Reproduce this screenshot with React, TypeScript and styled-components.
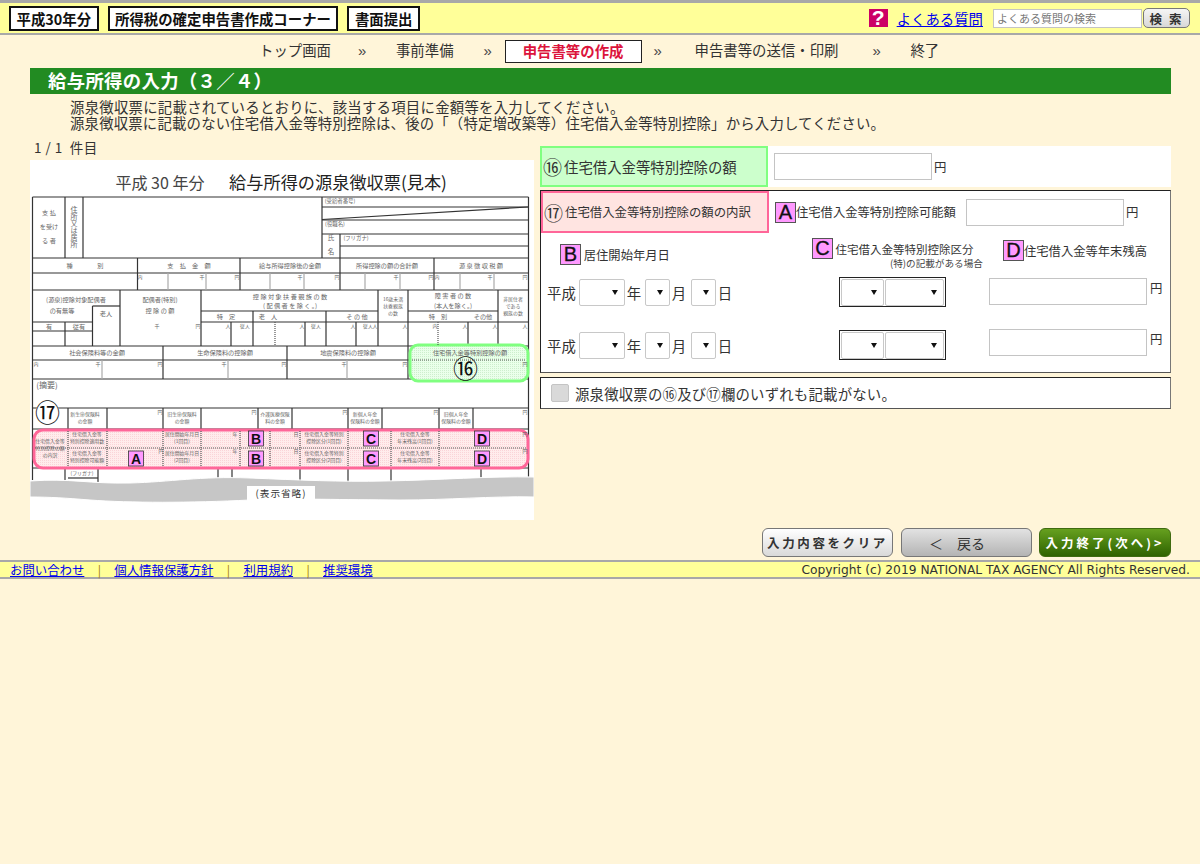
import React from "react";
import styled, { createGlobalStyle } from "styled-components";

const GlobalStyle = createGlobalStyle`
  html, body {
    margin: 0;
    padding: 0;
    background: #fff5d9;
  }
  body {
    height: 864px;
    overflow: hidden;
    color: #333;
    font-family: "Noto Sans CJK JP", "Liberation Sans", sans-serif;
    font-size: 14.4px;
  }
`;

const Header = styled.header`
  display: flex;
  align-items: center;
  height: 30px;
  padding: 0 10px 0 9px;
  background: #ffff99;
  border-top: 3px solid #a8a8a8;
  border-bottom: 2px solid #a8a8a8;
`;

const Pill = styled.div`
  display: flex;
  align-items: center;
  height: 21px;
  padding: 0 5.5px;
  margin-right: 9px;
  background: #fff;
  border: 2px solid #111;
  color: #111;
  font-size: 14.4px;
  font-weight: 700;
  white-space: nowrap;
`;

const HeaderRight = styled.div`
  display: flex;
  align-items: center;
  margin-left: auto;
`;

const HelpIcon = styled.div`
  display: flex;
  align-items: center;
  justify-content: center;
  width: 19px;
  height: 18px;
  margin-right: 9px;
  background: #cc0066;
  color: #fff;
  font-family: "Liberation Sans", sans-serif;
  font-size: 21px;
  font-weight: 700;
  line-height: 18px;
`;

const Link = styled.a<{ $size?: number }>`
  color: #0000ee;
  text-decoration: underline;
  font-size: ${(p) => p.$size ?? 14.4}px;
  white-space: nowrap;
`;

const SearchInput = styled.input`
  box-sizing: border-box;
  width: 149px;
  height: 19px;
  margin-left: 10px;
  padding: 0 3px;
  background: #fff;
  border: 1px solid #c4c4c4;
  font-family: inherit;
  font-size: 11px;
  &::placeholder {
    color: #777;
    opacity: 1;
  }
`;

const SearchButton = styled.button`
  box-sizing: border-box;
  width: 47px;
  height: 20px;
  margin-left: 1px;
  padding: 0;
  background: linear-gradient(#f5f5f5, #d8d8d8);
  border: 1px solid #777;
  border-radius: 5px;
  color: #333;
  font-family: inherit;
  font-size: 12.5px;
  font-weight: 700;
  letter-spacing: 2px;
`;

const Steps = styled.nav`
  display: flex;
  align-items: center;
  height: 33px;
  padding-left: 259px;
  box-sizing: border-box;
  white-space: nowrap;
`;

const Step = styled.span<{ $gap: number }>`
  margin-right: ${(p) => p.$gap}px;
  padding-bottom: 5px;
  color: #333;
`;

const Arrow = styled.span<{ $gap: number }>`
  width: 9px;
  margin-right: ${(p) => p.$gap}px;
  padding-bottom: 3px;
  color: #444;
  font-family: "Liberation Sans", sans-serif;
  font-size: 15px;
`;

const ActiveStep = styled.span`
  box-sizing: border-box;
  display: flex;
  align-items: center;
  justify-content: center;
  width: 137px;
  height: 23px;
  margin-right: 12px;
  padding-bottom: 3px;
  background: #fff;
  border: 1px solid #222;
  color: #dc143c;
  font-weight: 700;
`;

const Main = styled.main`
  box-sizing: border-box;
  width: 1141px;
  margin-left: 30px;
`;

const TitleBar = styled.h1`
  box-sizing: border-box;
  height: 26px;
  margin: 0;
  padding-left: 18px;
  background: #228b22;
  color: #fff;
  font-size: 18.4px;
  font-weight: 700;
  line-height: 25px;
  letter-spacing: 0.3px;
  text-spacing-trim: space-all;
`;

const Lead = styled.div`
  margin: 5px 0 0 40px;
`;

const LeadLine = styled.p<{ $spacing: number }>`
  margin: 0;
  color: #333;
  font-size: 14.4px;
  line-height: 16px;
  letter-spacing: ${(p) => p.$spacing}px;
  white-space: nowrap;
  text-spacing-trim: space-all;
`;

const Columns = styled.div`
  display: grid;
  grid-template-columns: 504px 631px;
  column-gap: 6px;
  margin-top: 7px;
`;

const LeftColumn = styled.section`
  display: flex;
  flex-direction: column;
`;

const Counter = styled.div`
  height: 22px;
  padding-left: 4px;
  font-size: 13.5px;
  line-height: 18px;
  letter-spacing: 0.5px;
  white-space: pre;
`;

const SampleSvg = styled.svg`
  display: block;
  width: 504px;
  height: 360px;
  background: #fff;

  line {
    stroke: #333;
    stroke-width: 1.2;
  }
  text {
    fill: #666;
    font-family: "Noto Sans CJK JP", sans-serif;
    font-size: 6.2px;
    text-anchor: middle;
  }
`;

const RightColumn = styled.section`
  display: flex;
  flex-direction: column;
  padding-top: 8px;
`;

const AmountRow = styled.div`
  display: flex;
  align-items: center;
  height: 41px;
  background: #fff;
`;

const Caption = styled.div<{ $tone: "green" | "pink"; $size: number }>`
  box-sizing: border-box;
  display: flex;
  align-items: center;
  flex: none;
  width: 228px;
  height: ${(p) => (p.$tone === "green" ? 41 : 42)}px;
  padding-left: 1px;
  background: ${(p) => (p.$tone === "green" ? "#ccffcc" : "#ffe4e1")};
  border: 2px solid ${(p) => (p.$tone === "green" ? "#80ff80" : "#ff6699")};
  color: #333;
  font-size: ${(p) => p.$size}px;
  white-space: nowrap;
`;

const Circled = styled.span`
  font-size: 19px;
  line-height: 1;
  margin-right: 2px;
`;

const AmountInput = styled.input<{ $left: number }>`
  box-sizing: border-box;
  flex: none;
  width: 158px;
  height: 27px;
  margin-left: ${(p) => p.$left}px;
  background: #fff;
  border: 1px solid #c4c4c4;
`;

const Yen = styled.span`
  margin-left: 2px;
  color: #333;
  font-size: 12.4px;
`;

const Panel = styled.div`
  box-sizing: border-box;
  display: flex;
  flex-direction: column;
  height: 183px;
  margin-top: 3px;
  background: #fff;
  border: 1px solid #222;
  border-right-color: #777;
  border-bottom-color: #555;
`;

const PanelTop = styled.div`
  display: flex;
  align-items: center;
`;

const Badge = styled.span`
  box-sizing: border-box;
  display: inline-flex;
  align-items: center;
  justify-content: center;
  flex: none;
  width: 21px;
  height: 21px;
  background: #ff99ff;
  border: 1px solid #555;
  color: #111;
  font-family: "Liberation Sans", sans-serif;
  font-size: 20px;
  -webkit-text-stroke: 0.3px #111;
`;

const Labelled = styled.div<{ $width: number; $size?: number }>`
  display: flex;
  align-items: center;
  flex: none;
  width: ${(p) => p.$width}px;
  color: #333;
  font-size: ${(p) => p.$size ?? 12.3}px;
  white-space: nowrap;
`;

const BadgeSlot = styled.div`
  margin-left: 6px;
  width: 191px;
  display: flex;
  align-items: center;
`;

const HeadRow = styled.div`
  display: flex;
  height: 44px;
  padding-left: 19px;
  box-sizing: border-box;
`;

const HeadCell = styled.div<{ $width: number; $top: number }>`
  flex: none;
  width: ${(p) => p.$width}px;
  padding-top: ${(p) => p.$top}px;
  box-sizing: border-box;
`;

const SubNote = styled.div`
  margin-top: -2px;
  padding-left: 78px;
  color: #444;
  font-size: 9.6px;
  line-height: 12px;
  white-space: nowrap;
`;

const EntryRow = styled.div<{ $top: number }>`
  display: grid;
  grid-template-columns: 298px 150px 1fr;
  align-items: start;
  margin-top: ${(p) => p.$top}px;
`;

const DateCell = styled.div`
  display: flex;
  align-items: center;
  height: 30px;
  padding-left: 6px;
  font-size: 14.4px;
`;

const DateUnit = styled.span`
  margin: 0 1px 0 2px;
  width: 17px;
`;

const SelectWrap = styled.span<{ $width: number; $left?: number }>`
  position: relative;
  display: inline-block;
  flex: none;
  width: ${(p) => p.$width}px;
  height: 27px;
  margin-left: ${(p) => p.$left ?? 0}px;

  &::after {
    content: "";
    position: absolute;
    top: 11px;
    right: 7px;
    border-style: solid;
    border-width: 5px 3px 0;
    border-color: #111 transparent transparent;
    pointer-events: none;
  }
`;

const PlainSelect = styled.select`
  appearance: none;
  box-sizing: border-box;
  display: block;
  width: 100%;
  height: 100%;
  background: #fff;
  border: 1px solid #c8c8c8;
  border-radius: 2px;
`;

const SelectGroup = styled.div`
  box-sizing: border-box;
  display: flex;
  gap: 1px;
  width: 107px;
  height: 30px;
  padding: 1px;
  background: #fff;
  border: 1px solid #222;
`;

const EntryAmount = styled.div<{ $top: number }>`
  display: flex;
  align-items: flex-start;
  margin-top: ${(p) => p.$top}px;
`;

const SmallYen = styled.span`
  margin: 1px 0 0 3px;
  font-size: 12.4px;
`;

const CheckRow = styled.label`
  box-sizing: border-box;
  display: flex;
  align-items: center;
  height: 32px;
  margin-top: 4px;
  padding-left: 10px;
  background: #fff;
  border: 1px solid #222;
  border-right-color: #777;
  border-bottom-color: #555;
  color: #333;
  font-size: 14.4px;
  letter-spacing: 0.2px;
  white-space: nowrap;
`;

const CheckMark = styled.span`
  box-sizing: border-box;
  flex: none;
  width: 18px;
  height: 18px;
  margin-right: 6px;
  background: #d9d9d9;
  border: 1px solid #c4c4c4;
  border-radius: 2px;
`;

const Actions = styled.div`
  display: flex;
  justify-content: flex-end;
  gap: 7.5px;
  height: 29px;
  margin-top: 8px;
`;

const ActionButton = styled.button<{ $kind: "light" | "grey" | "green" }>`
  box-sizing: border-box;
  width: ${(p) => (p.$kind === "green" ? 132 : 131)}px;
  height: 29px;
  padding: 0 ${(p) => (p.$kind === "grey" ? 18 : 0)}px 0 0;
  border: 1px solid ${(p) => (p.$kind === "green" ? "#3f6b10" : "#777")};
  border-radius: 6px;
  background: ${(p) =>
    p.$kind === "light"
      ? "linear-gradient(#ffffff, #d9d9d9)"
      : p.$kind === "grey"
        ? "linear-gradient(#e2e2e2, #b4b4b4)"
        : "linear-gradient(#66a01f, #2f6300)"};
  color: ${(p) => (p.$kind === "green" ? "#fff" : "#333")};
  font-family: inherit;
  font-size: ${(p) => (p.$kind === "grey" ? 14 : 12.5)}px;
  font-weight: ${(p) => (p.$kind === "grey" ? 400 : 700)};
  letter-spacing: ${(p) => (p.$kind === "grey" ? 0 : p.$kind === "green" ? 3 : 2.6)}px;
  white-space: nowrap;
`;

const Footer = styled.footer`
  box-sizing: border-box;
  display: flex;
  align-items: center;
  height: 19px;
  margin-top: 3px;
  padding: 0 10px;
  background: #ffff99;
  border-top: 2px solid #a8a8a8;
  border-bottom: 2px solid #a8a8a8;
`;

const Divider = styled.span`
  width: 30px;
  text-align: center;
  color: #a07808;
  font-size: 12px;
`;

const Copyright = styled.span`
  margin-left: auto;
  color: #333;
  font-family: "DejaVu Sans", sans-serif;
  font-size: 12.25px;
  white-space: nowrap;
`;

// form lines, page coordinates: x1 y1 x2 y2
const formLines: number[][] = [
  [32.5, 197, 528.5, 197], [32.5, 197, 32.5, 480], [528.5, 197, 528.5, 480],
  [65, 197, 65, 258], [83, 197, 83, 258], [322, 197, 322, 258],
  [322, 207, 528, 207], [322, 220, 528, 220], [322, 234, 528, 234], [340, 246, 528, 246], [340, 234, 340, 258],
  [322, 219.5, 528, 207],
  [32.5, 258, 528.5, 258], [32.5, 273, 528.5, 273], [32.5, 290, 528.5, 290],
  [137.5, 258, 137.5, 290], [240, 258, 240, 290], [340, 258, 340, 290], [434, 258, 434, 290],
  [120, 290, 120, 346], [201, 290, 201, 346], [92.5, 306, 92.5, 346],
  [92.5, 306, 120, 306], [32.5, 322, 92.5, 322], [32.5, 331, 92.5, 331], [65, 322, 65, 346],
  [201, 311, 378, 311], [408, 311, 498, 311], [201, 322, 528, 322],
  [253, 311, 253, 346], [326, 311, 326, 346], [378, 290, 378, 346], [408, 290, 408, 346], [498, 290, 498, 346],
  [231, 322, 231, 346], [305, 322, 305, 346], [356, 322, 356, 346], [468, 322, 468, 346],
  [32.5, 346, 528.5, 346], [32.5, 360, 528.5, 360], [32.5, 379, 528.5, 379],
  [163, 346, 163, 379], [287, 346, 287, 379], [408, 346, 408, 379],
  [32.5, 408, 528.5, 408], [32.5, 429, 528.5, 429],
  [68, 408, 68, 429], [107, 408, 107, 429], [163, 408, 163, 429], [201, 408, 201, 429],
  [258, 408, 258, 429], [292, 408, 292, 429], [348, 408, 348, 429], [382, 408, 382, 429], [439, 408, 439, 429], [473, 408, 473, 429],
  [32.5, 468, 528.5, 468], [65, 468, 65, 482], [98, 468, 98, 482], [218, 468, 218, 482], [232, 468, 232, 482],
  [300, 468, 300, 482], [348, 468, 348, 482], [391, 468, 391, 482], [481, 468, 481, 482], [68, 478, 98, 478],
];

const formMinor: number[][] = [
  [168, 273, 168, 290], [206, 273, 206, 290], [270, 273, 270, 290], [304, 273, 304, 290], [365, 273, 365, 290],
  [400, 273, 400, 290], [460, 273, 460, 290], [494, 273, 494, 290],
  [102, 360, 102, 379], [228, 360, 228, 379], [347, 360, 347, 379],
];

const formDotted: number[][] = [
  [275, 322, 275, 346], [438, 322, 438, 346],
  [35, 448, 527, 448], [68, 431, 68, 467], [107, 431, 107, 467], [163, 431, 163, 467], [201, 431, 201, 467],
  [240, 431, 240, 467], [270, 431, 270, 467], [300, 431, 300, 467], [348, 431, 348, 467], [391, 431, 391, 467], [439, 431, 439, 467],
  [412, 360, 526, 360],
];

// form texts: x y text
const formTexts: [number, number, string][] = [
  [49, 215, "支 払"], [49, 229, "を受け"], [49, 243, "る 者"],
  [85, 268, "種　　　　別"], [189, 268, "支　払　金　額"], [290, 268, "給与所得控除後の金額"],
  [387, 268, "所得控除の額の合計額"], [481, 268, "源 泉 徴 収 税 額"],
  [76, 302, "(源泉)控除対象配偶者"], [62, 313, "の有無等"], [106, 316, "老人"],
  [160, 302, "配偶者(特別)"], [160, 313, "控 除 の 額"], [290, 299, "控 除 対 象 扶 養 親 族 の 数"],
  [290, 308, "( 配 偶 者 を 除 く 。)"], [226, 319, "特　定"], [268, 319, "老　人"], [357, 319, "そ の 他"],
  [453, 298, "障 害 者 の 数"], [453, 308, "(本人を除く。)"], [438, 319, "特　別"], [483, 319, "その他"],
  [49, 329, "有"], [79, 329, "従有"],
  [97, 355, "社会保険料等の金額"], [225, 355, "生命保険料の控除額"], [348, 355, "地震保険料の控除額"], [470, 355, "住宅借入金等特別控除の額"],
];

// the narrow cells hold a smaller print
const formSmall: [number, number, string][] = [
  [393, 301, "16歳未満"], [393, 308, "扶養親族"], [393, 315, "の数"],
  [513, 301, "非居住者"], [513, 308, "である"], [513, 315, "親族の数"],
  [245, 328, "従人"], [316, 328, "従人"], [368, 328, "従人"],
  [85, 416, "新生命保険料"], [85, 423, "の金額"], [182, 416, "旧生命保険料"], [182, 423, "の金額"],
  [275, 416, "介護医療保険"], [275, 423, "料の金額"], [365, 416, "新個人年金"], [365, 423, "保険料の金額"],
  [456, 416, "旧個人年金"], [456, 423, "保険料の金額"],
  [50, 443, "住宅借入金等"], [50, 450, "特別控除の額"], [50, 457, "の内訳"],
  [87, 436, "住宅借入金等"], [87, 443, "特別控除適用数"], [87, 455, "住宅借入金等"], [87, 462, "特別控除可能額"],
  [182, 436, "居住開始年月日"], [182, 443, "(1回目)"], [182, 455, "居住開始年月日"], [182, 462, "(2回目)"],
  [324, 436, "住宅借入金等特別"], [324, 443, "控除区分(1回目)"], [324, 455, "住宅借入金等特別"], [324, 462, "控除区分(2回目)"],
  [415, 436, "住宅借入金等"], [415, 443, "年末残高(1回目)"], [415, 455, "住宅借入金等"], [415, 462, "年末残高(2回目)"],
  [82, 475, "(フリガナ)"],
];

// small unit marks at the right of each cell
const formUnits: [number, number, string][] = [
  [140, 279, "内"], [202, 279, "千"], [237, 279, "円"], [300, 279, "千"], [337, 279, "円"], [396, 279, "千"], [431, 279, "円"],
  [437, 279, "内"], [490, 279, "千"], [525, 279, "円"],
  [157, 328, "千"], [198, 328, "円"], [228, 328, "人"], [302, 328, "人"], [353, 328, "人"], [375, 328, "人"], [405, 328, "人"], [435, 328, "内"], [465, 328, "人"], [495, 328, "人"], [525, 328, "人"],
  [36, 366, "内"], [98, 366, "千"], [160, 366, "円"], [224, 366, "千"], [284, 366, "円"], [344, 366, "千"], [405, 366, "円"], [525, 366, "円"],
  [160, 414, "円"], [254, 414, "円"], [345, 414, "円"], [436, 414, "円"], [525, 414, "円"],
  [235, 436, "年"], [235, 453, "年"], [296, 436, "日"], [296, 453, "日"], [525, 436, "円"], [525, 453, "円"], [161, 453, "円"],
];

const badges: [number, number, string][] = [
  [128, 451, "A"], [248, 431, "B"], [248, 451, "B"], [363, 431, "C"], [363, 451, "C"], [474, 431, "D"], [474, 451, "D"],
];

const FormSample: React.FC = () => (
  <SampleSvg viewBox="30 160 504 360" xmlns="http://www.w3.org/2000/svg">
    <defs>
      <pattern id="dotsPink" width="2" height="2" patternUnits="userSpaceOnUse">
        <rect width="2" height="2" fill="#ffecec" />
        <rect width="1" height="1" fill="#fad4d8" />
      </pattern>
      <pattern id="dotsGreen" width="2" height="2" patternUnits="userSpaceOnUse">
        <rect width="2" height="2" fill="#eaffea" />
        <rect width="1" height="1" fill="#cdeecd" />
      </pattern>
    </defs>

    <text x={160} y={189} style={{ fontSize: 16, fill: "#444" }}>平成 30 年分</text>
    <text x={338} y={189} style={{ fontSize: 17.2, fill: "#222" }}>給与所得の源泉徴収票(見本)</text>

    {formLines.map(([x1, y1, x2, y2], i) => (
      <line key={i} x1={x1} y1={y1} x2={x2} y2={y2} />
    ))}
    {formMinor.map(([x1, y1, x2, y2], i) => (
      <line key={i} x1={x1} y1={y1} x2={x2} y2={y2} style={{ stroke: "#aaa" }} />
    ))}

    <text x={74} y={227} writingMode="tb" style={{ fontSize: 7 }}>住所又は居所</text>
    <text x={331} y={240} style={{ fontSize: 6.5 }}>氏</text>
    <text x={331} y={254} style={{ fontSize: 6.5 }}>名</text>
    <text x={340} y={203} style={{ fontSize: 5.4 }}>(受給者番号)</text>
    <text x={335} y={226} style={{ fontSize: 5.4 }}>(役職名)</text>
    <text x={356} y={240} style={{ fontSize: 5.4 }}>(フリガナ)</text>
    <text x={47} y={388} style={{ fontSize: 8 }}>(摘要)</text>

    <rect x={34} y={430} width={494} height={38} rx={9} fill="url(#dotsPink)" stroke="#ff6699" strokeWidth={3} />
    <rect x={410} y={345} width={118} height={36} rx={8} fill="url(#dotsGreen)" stroke="#80ff80" strokeWidth={3} />

    {formDotted.map(([x1, y1, x2, y2], i) => (
      <line key={i} x1={x1} y1={y1} x2={x2} y2={y2} style={{ stroke: "#555", strokeDasharray: "1 1" }} />
    ))}
    {formTexts.map(([x, y, t], i) => (
      <text key={i} x={x} y={y}>{t}</text>
    ))}
    {formSmall.map(([x, y, t], i) => (
      <text key={i} x={x} y={y} style={{ fontSize: 4.9 }}>{t}</text>
    ))}
    {formUnits.map(([x, y, t], i) => (
      <text key={i} x={x} y={y} style={{ fontSize: 5 }}>{t}</text>
    ))}
    {badges.map(([x, y, t], i) => (
      <g key={i}>
        <rect x={x + 0.5} y={y} width={15} height={15} fill="#ff99ff" stroke="#333" strokeWidth={0.8} />
        <text x={x + 8} y={y + 12.5} style={{ fontFamily: "Liberation Sans, sans-serif", fontSize: 14, fontWeight: 700, fill: "#111" }}>{t}</text>
      </g>
    ))}

    <circle cx={47.5} cy={413} r={12} fill="#fff" />
    <text x={47.5} y={422} style={{ fontSize: 25, fill: "#111" }}>⑰</text>
    <text x={465.5} y={378} style={{ fontSize: 25, fill: "#111" }}>⑯</text>

    <path
      d="M30 481 C 70 478, 90 484, 130 483 C 170 482, 200 476, 250 478 C 300 480, 340 482, 385 481 C 440 480, 490 476, 534 477 L 534 497 C 490 496, 450 500, 400 500 C 340 500, 300 498, 250 500 C 190 503, 130 503, 90 500 C 65 498, 50 497, 30 497 Z"
      fill="#c6c6c6"
      stroke="#fff"
      strokeWidth={1}
    />
    <rect x={247} y={486} width={68} height={15} fill="#fff" />
    <text x={281} y={497} style={{ fontSize: 9.6, fill: "#333", letterSpacing: 1 }}>(表示省略)</text>
  </SampleSvg>
);

const DateFields: React.FC = () => (
  <DateCell>
    平成
    <SelectWrap $width={46} $left={3}><PlainSelect /></SelectWrap>
    <DateUnit>年</DateUnit>
    <SelectWrap $width={25}><PlainSelect /></SelectWrap>
    <DateUnit>月</DateUnit>
    <SelectWrap $width={25} $left={1}><PlainSelect /></SelectWrap>
    <DateUnit>日</DateUnit>
  </DateCell>
);

const DeductionSelects: React.FC = () => (
  <SelectGroup>
    <SelectWrap $width={43}><PlainSelect /></SelectWrap>
    <SelectWrap $width={59}><PlainSelect /></SelectWrap>
  </SelectGroup>
);

const EntryBalance: React.FC<{ top: number }> = ({ top }) => (
  <EntryAmount $top={top}>
    <AmountInput $left={0} />
    <SmallYen>円</SmallYen>
  </EntryAmount>
);

const App: React.FC = () => {
  return (
    <>
      <GlobalStyle />
      <Header>
        <Pill>平成30年分</Pill>
        <Pill>所得税の確定申告書作成コーナー</Pill>
        <Pill>書面提出</Pill>
        <HeaderRight>
          <HelpIcon>?</HelpIcon>
          <Link>よくある質問</Link>
          <SearchInput placeholder="よくある質問の検索" />
          <SearchButton>検 索</SearchButton>
        </HeaderRight>
      </Header>

      <Steps>
        <Step $gap={27}>トップ画面</Step>
        <Arrow $gap={29}>»</Arrow>
        <Step $gap={30}>事前準備</Step>
        <Arrow $gap={12}>»</Arrow>
        <ActiveStep>申告書等の作成</ActiveStep>
        <Arrow $gap={32}>»</Arrow>
        <Step $gap={34}>申告書等の送信・印刷</Step>
        <Arrow $gap={29}>»</Arrow>
        <Step $gap={0}>終了</Step>
      </Steps>

      <Main>
        <TitleBar>給与所得の入力（３／４）</TitleBar>
        <Lead>
          <LeadLine $spacing={0.25}>
            源泉徴収票に記載されているとおりに、該当する項目に金額等を入力してください。
          </LeadLine>
          <LeadLine $spacing={0.18}>
            源泉徴収票に記載のない住宅借入金等特別控除は、後の「（特定増改築等）住宅借入金等特別控除」から入力してください。
          </LeadLine>
        </Lead>

        <Columns>
          <LeftColumn>
            <Counter>1 / 1  件目</Counter>
            <FormSample />
          </LeftColumn>

          <RightColumn>
            <AmountRow>
              <Caption $tone="green" $size={14.4}>
                <Circled>⑯</Circled>住宅借入金等特別控除の額
              </Caption>
              <AmountInput $left={6} />
              <Yen>円</Yen>
            </AmountRow>

            <Panel>
              <PanelTop>
                <Caption $tone="pink" $size={12.4}>
                  <Circled>⑰</Circled>住宅借入金等特別控除の額の内訳
                </Caption>
                <BadgeSlot>
                  <Badge>A</Badge>
                  <Labelled $width={168}>住宅借入金等特別控除可能額</Labelled>
                </BadgeSlot>
                <AmountInput $left={0} />
                <Yen>円</Yen>
              </PanelTop>

              <HeadRow>
                <HeadCell $width={252} $top={11}>
                  <Labelled $width={200}><Badge>B</Badge>&nbsp;居住開始年月日</Labelled>
                </HeadCell>
                <HeadCell $width={191} $top={5}>
                  <Labelled $width={180} $size={11.5}><Badge>C</Badge>&nbsp;住宅借入金等特別控除区分</Labelled>
                  <SubNote>(特)の記載がある場合</SubNote>
                </HeadCell>
                <HeadCell $width={150} $top={7}>
                  <Labelled $width={150}><Badge>D</Badge>住宅借入金等年末残高</Labelled>
                </HeadCell>
              </HeadRow>

              <EntryRow $top={0}>
                <DateFields />
                <DeductionSelects />
                <EntryBalance top={1} />
              </EntryRow>
              <EntryRow $top={23}>
                <DateFields />
                <DeductionSelects />
                <EntryBalance top={-1} />
              </EntryRow>
            </Panel>

            <CheckRow>
              <CheckMark />
              源泉徴収票の⑯及び⑰欄のいずれも記載がない。
            </CheckRow>
          </RightColumn>
        </Columns>

        <Actions>
          <ActionButton $kind="light">入力内容をクリア</ActionButton>
          <ActionButton $kind="grey">＜　戻る</ActionButton>
          <ActionButton $kind="green">入力終了(次へ)&gt;</ActionButton>
        </Actions>
      </Main>

      <Footer>
        <Link $size={12.4}>お問い合わせ</Link>
        <Divider>|</Divider>
        <Link $size={12.4}>個人情報保護方針</Link>
        <Divider>|</Divider>
        <Link $size={12.4}>利用規約</Link>
        <Divider>|</Divider>
        <Link $size={12.4}>推奨環境</Link>
        <Copyright>Copyright (c) 2019 NATIONAL TAX AGENCY All Rights Reserved.</Copyright>
      </Footer>
    </>
  );
};

export default App;
